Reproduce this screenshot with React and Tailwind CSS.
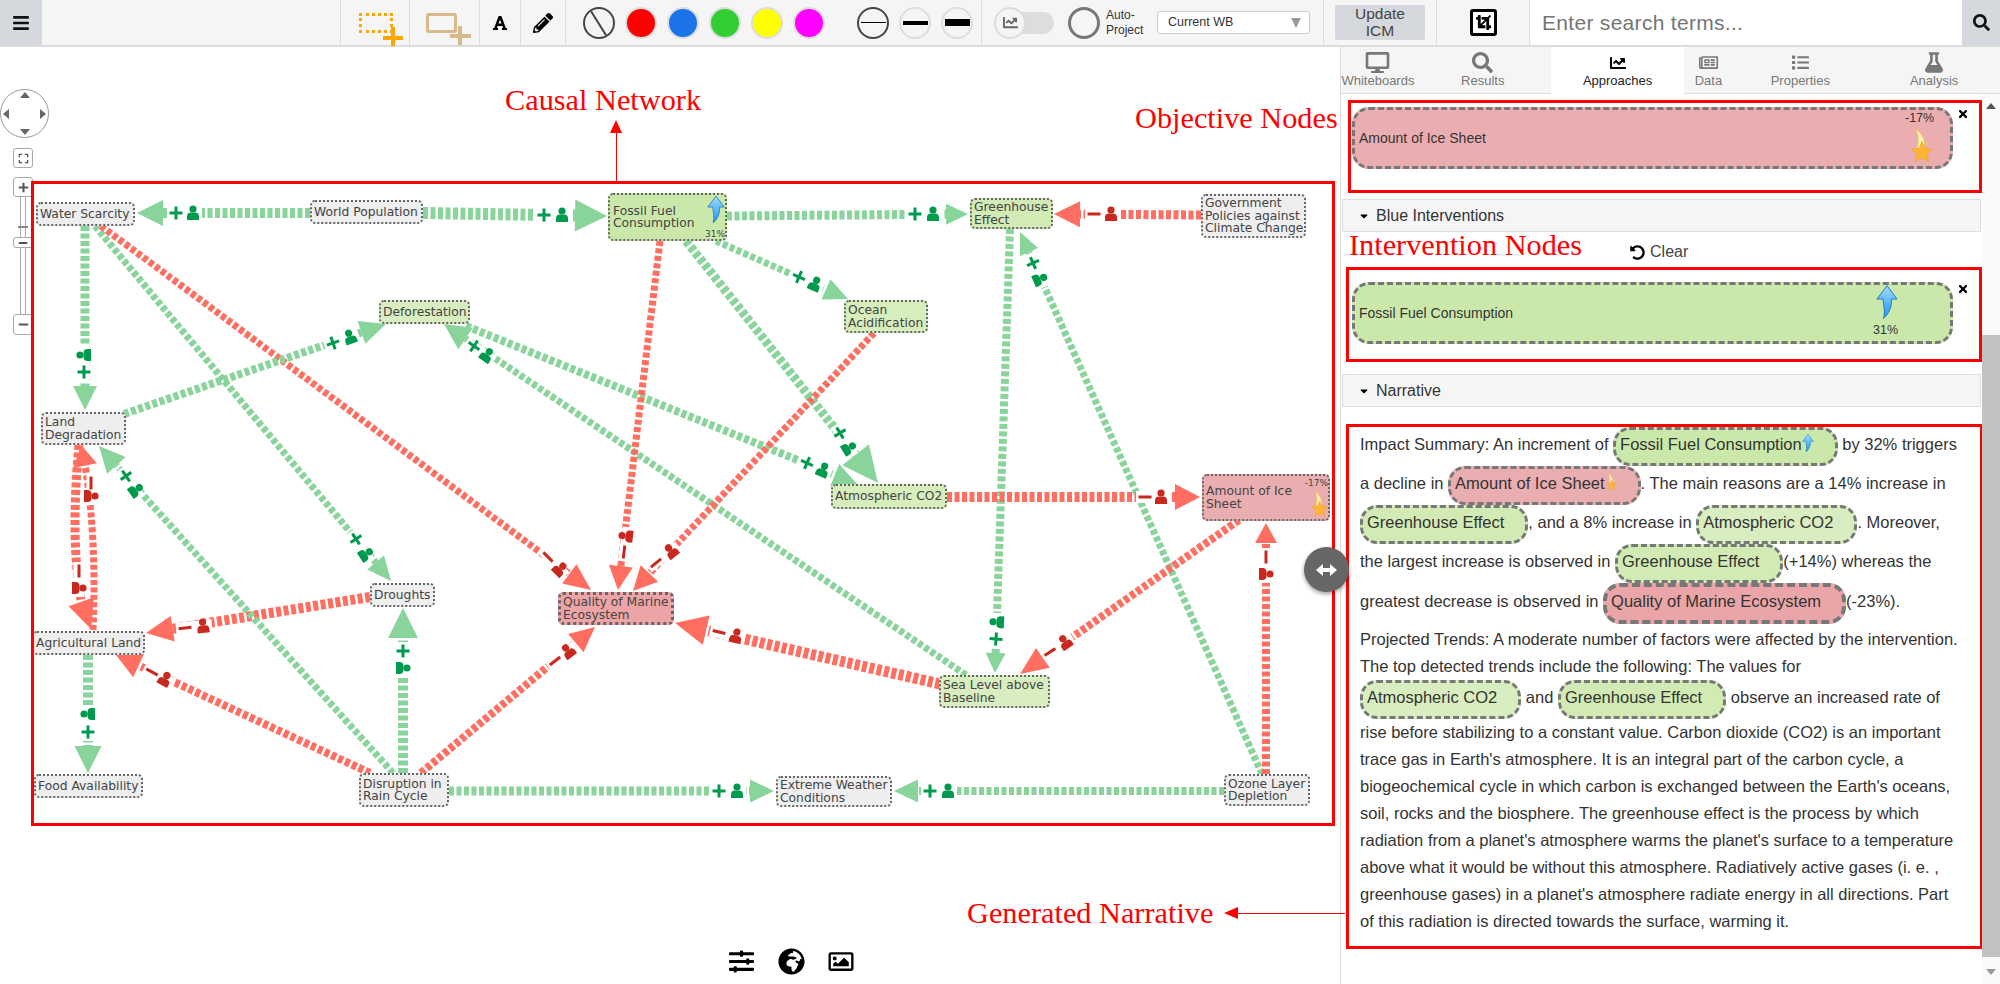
import React from 'react';
import {
  FaBars, FaFont, FaPencilAlt, FaChartLine, FaSearch, FaDesktop, FaRegNewspaper, FaList, FaFlask,
  FaTimes, FaCaretDown, FaUndoAlt, FaCrop, FaSlidersH, FaGlobeAfrica, FaRegImage, FaExpand, FaPlus, FaMinus,
} from 'react-icons/fa';

const GREEN = '#88d49b';
const RED = '#ff6e60';
const GREEN_DARK = '#009a4e';
const RED_DARK = '#c9281e';

// from, tip, stroke width, head length, head width, sign pos, person pos
const edges = [
  { s: '+', a: [423, 213], b: [607, 216], w: 12, hl: 32, hw: 32, g: [544, 215], p: [562, 215] },
  { s: '+', a: [310, 213], b: [137, 213], w: 10, hl: 26, hw: 26, g: [176, 213], p: [193, 213] },
  { s: '+', a: [85, 226], b: [85, 410], w: 9, hl: 24, hw: 24, g: [84, 372], p: [84, 355] },
  { s: '+', a: [95, 226], b: [391, 581], w: 7, hl: 24, hw: 22, g: [356, 539], p: [366, 554] },
  { s: '-', a: [101, 226], b: [591, 590], w: 7, hl: 27, hw: 24, g: [548, 557], p: [560, 569] },
  { s: '+', a: [124, 414], b: [386, 324], w: 8, hl: 26, hw: 24, g: [333, 343], p: [350, 337] },
  { s: '+', a: [466, 326], b: [857, 484], w: 8, hl: 24, hw: 24, g: [807, 463], p: [823, 470] },
  { s: '+', a: [966, 675], b: [444, 324], w: 7, hl: 26, hw: 26, g: [474, 346], p: [487, 355] },
  { s: '+', a: [716, 241], b: [848, 299], w: 7, hl: 24, hw: 22, g: [799, 277], p: [815, 284] },
  { s: '+', a: [686, 241], b: [878, 483], w: 9, hl: 36, hw: 34, g: [840, 433], p: [849, 448] },
  { s: '+', a: [727, 216], b: [968, 214], w: 9, hl: 22, hw: 21, g: [915, 214], p: [933, 214] },
  { s: '-', a: [1201, 215], b: [1054, 214], w: 9, hl: 26, hw: 26, g: [1094, 214], p: [1111, 214] },
  { s: '+', a: [1010, 229], b: [995, 673], w: 8, hl: 20, hw: 20, g: [996, 639], p: [997, 622] },
  { s: '+', a: [1262, 774], b: [1020, 232], w: 7, hl: 22, hw: 20, g: [1033, 263], p: [1040, 279] },
  { s: '-', a: [947, 497], b: [1200, 497], w: 10, hl: 25, hw: 26, g: [1145, 497], p: [1161, 497] },
  { s: '-', a: [1266, 774], b: [1266, 523], w: 8, hl: 20, hw: 22, g: [1266, 557], p: [1266, 574] },
  { s: '-', a: [1239, 520], b: [1020, 674], w: 8, hl: 28, hw: 24, g: [1050, 652], p: [1065, 642] },
  { s: '-', a: [940, 684], b: [675, 623], w: 11, hl: 32, hw: 30, g: [719, 632], p: [736, 636] },
  { s: '-', a: [660, 241], b: [618, 590], w: 7, hl: 24, hw: 24, g: [624, 552], p: [626, 536] },
  { s: '-', a: [874, 333], b: [633, 591], w: 7, hl: 24, hw: 24, g: [656, 563], p: [671, 551] },
  { s: '-', a: [370, 597], b: [146, 633], w: 10, hl: 27, hw: 26, g: [185, 628], p: [203, 626] },
  { s: '-', a: [370, 773], b: [116, 655], w: 8, hl: 25, hw: 26, g: [152, 672], p: [165, 679] },
  { s: '+', a: [393, 773], b: [99, 446], w: 7, hl: 26, hw: 25, g: [126, 476], p: [136, 490] },
  { s: '+', a: [403, 773], b: [403, 608], w: 10, hl: 30, hw: 30, g: [403, 651], p: [403, 668] },
  { s: '-', a: [421, 773], b: [595, 627], w: 8, hl: 25, hw: 24, g: [555, 661], p: [568, 651] },
  { s: '+', a: [88, 655], b: [88, 773], w: 10, hl: 27, hw: 27, g: [88, 732], p: [88, 714] },
  { s: '+', a: [449, 791], b: [774, 791], w: 9, hl: 24, hw: 23, g: [719, 791], p: [737, 791] },
  { s: '+', a: [1224, 791], b: [894, 791], w: 8, hl: 24, hw: 23, g: [930, 791], p: [948, 791] },
  // the two bowed edges between Land Degradation and Agricultural Land
  { s: '-', a: [79, 445], b: [91, 629], ctrl: [70, 540], w: 9, hl: 29, hw: 27, g: [79, 571], p: [79, 588], from: [80, 598] },
  { s: '-', a: [93, 630], b: [81, 445], ctrl: [97, 540], w: 7, hl: 21, hw: 24, g: [91, 483], p: [91, 496], from: [85, 465] },
];

function headPoints(e) {
  const src = e.from || e.a;
  const dx = e.b[0] - src[0];
  const dy = e.b[1] - src[1];
  const len = Math.hypot(dx, dy);
  const ux = dx / len;
  const uy = dy / len;
  const bx = e.b[0] - ux * e.hl;
  const by = e.b[1] - uy * e.hl;
  const hx = (-uy * e.hw) / 2;
  const hy = (ux * e.hw) / 2;
  return { bx, by, pts: `${e.b[0]},${e.b[1]} ${bx + hx},${by + hy} ${bx - hx},${by - hy}` };
}

function EdgeLine({ e }) {
  const color = e.s === '+' ? GREEN : RED;
  const { bx, by, pts } = headPoints(e);
  const d = e.ctrl
    ? `M${e.a[0]} ${e.a[1]} Q${e.ctrl[0]} ${e.ctrl[1]} ${bx} ${by}`
    : `M${e.a[0]} ${e.a[1]} L${bx} ${by}`;
  return (
    <g>
      <path d={d} fill="none" stroke={color} strokeWidth={e.w} strokeDasharray="5 2.5" />
      <polygon points={pts} fill={color} />
    </g>
  );
}

function EdgeLabel({ e }) {
  const color = e.s === '+' ? GREEN_DARK : RED_DARK;
  const dx = e.p[0] - e.g[0];
  const dy = e.p[1] - e.g[1];
  const angle = (Math.atan2(dy, dx) * 180) / Math.PI;
  const cx = (e.g[0] + e.p[0]) / 2;
  const cy = (e.g[1] + e.p[1]) / 2;
  const gap = Math.hypot(dx, dy);
  return (
    <g>
      <rect x={-gap / 2 - 9} y={-e.w / 2 - 1} width={gap + 18} height={e.w + 2} fill="#fff" transform={`translate(${cx} ${cy}) rotate(${angle})`} />
      <g transform={`translate(${e.g[0]} ${e.g[1]}) rotate(${angle})`}>
        <rect x="-6.5" y="-1.5" width="13" height="3" fill={color} />
        {e.s === '+' && <rect x="-1.5" y="-6.5" width="3" height="13" fill={color} />}
      </g>
      <g transform={`translate(${e.p[0]} ${e.p[1]}) rotate(${angle})`} fill={color}>
        <circle cx="0" cy="-4" r="3.6" />
        <path d="M-6 7 v-3.5 a4 4 0 0 1 4 -4 h4 a4 4 0 0 1 4 4 v3.5 z" />
      </g>
    </g>
  );
}

function BlueArrow({ className }) {
  return (
    <svg viewBox="0 0 22 34" className={className}>
      <defs>
        <linearGradient id="blueArrowFill" x1="0" y1="0" x2="0" y2="1">
          <stop offset="0" stopColor="#9fdcff" />
          <stop offset="1" stopColor="#1f97ec" />
        </linearGradient>
      </defs>
      <path d="M11 .7 L21 14 L15.5 14 C15.8 22 13 29 7.5 33.3 C9.5 26 7.5 20 7 14 L1 14 Z" fill="url(#blueArrowFill)" stroke="#1b7cc4" strokeWidth="1" />
    </svg>
  );
}

function Flame({ className }) {
  return (
    <svg viewBox="0 0 24 34" className={className}>
      <path d="M7 0 C13 4 17 12 15.5 20 L8 19 C10 13 9 6 7 0 Z" fill="#fff3b0" stroke="#eec34a" strokeWidth=".8" />
      <polygon points="13,12.5 15.9,19.5 23.5,20.1 17.8,25.1 19.5,32.4 13,28.5 6.5,32.4 8.2,25.1 2.5,20.1 10.1,19.5" fill="#ffb733" stroke="#eda52a" strokeWidth=".8" />
    </svg>
  );
}

const nodes = [
  { t: 'Water Scarcity', c: 'left-[36px] top-[155px] w-[99px] h-[24px] bg-[#eeeeee]' },
  { t: 'World Population', c: 'left-[310px] top-[153px] w-[113px] h-[24px] bg-[#eeeeee]' },
  { t: 'Greenhouse\nEffect', c: 'left-[970px] top-[151px] w-[83px] h-[31px] bg-[#d2eab4]' },
  { t: 'Government\nPolicies against\nClimate Change', c: 'left-[1201px] top-[147px] w-[105px] h-[44px] bg-[#eeeeee]' },
  { t: 'Ocean\nAcidification', c: 'left-[844px] top-[253px] w-[84px] h-[33px] bg-[#d6edbc]' },
  { t: 'Deforestation', c: 'left-[379px] top-[253px] w-[91px] h-[24px] bg-[#d9eec0]' },
  { t: 'Land\nDegradation', c: 'left-[41px] top-[365px] w-[85px] h-[33px] bg-[#eeeeee]' },
  { t: 'Atmospheric CO2', c: 'left-[831px] top-[437px] w-[116px] h-[25px] bg-[#d6edbc]' },
  { t: 'Droughts', c: 'left-[370px] top-[536px] w-[65px] h-[24px] bg-[#eeeeee]' },
  { t: 'Agricultural Land', c: 'left-[32px] top-[584px] w-[113px] h-[24px] bg-[#eeeeee]' },
  { t: 'Food Availability', c: 'left-[34px] top-[727px] w-[109px] h-[24px] bg-[#eeeeee]' },
  { t: 'Disruption in\nRain Cycle', c: 'left-[359px] top-[726px] w-[90px] h-[34px] bg-[#eeeeee]' },
  { t: 'Sea Level above\nBaseline', c: 'left-[939px] top-[628px] w-[111px] h-[33px] bg-[#d9eec0]' },
  { t: 'Extreme Weather\nConditions', c: 'left-[776px] top-[729px] w-[116px] h-[31px] bg-[#eeeeee]' },
  { t: 'Ozone Layer\nDepletion', c: 'left-[1224px] top-[727px] w-[86px] h-[32px] bg-[#eeeeee]' },
];

function Node({ t, c, children }) {
  return (
    <div className={`absolute flex items-center pl-[2px] border-2 border-dotted border-[#666] rounded-[5px] font-['DejaVu_Sans',sans-serif] text-[12.3px] leading-[12.5px] text-[#444] whitespace-pre-line ${c}`}>
      {t}
      {children}
    </div>
  );
}

function ColorDot({ className }) {
  return <div className={`w-8 h-8 rounded-full border-2 border-[#ddd] ${className}`} />;
}

function Sep({ className }) {
  return <div className={`h-full border-r border-[#ddd] ${className}`} />;
}

function WeightDot({ bar, ring }) {
  return (
    <div className={`w-8 h-8 rounded-full border-2 flex items-center justify-center ${ring}`}>
      <div className={`w-[25px] bg-black ${bar}`} />
    </div>
  );
}

function Toolbar() {
  return (
    <div className="flex h-[47px] items-stretch bg-[#f5f5f5] border-b-2 border-[#ddd] text-[#333]">
      <div className="w-[42px] bg-[#d5d8dc] flex items-center justify-center"><FaBars className="w-[18px] h-[18px] text-[#111]" /></div>
      <Sep className="w-[299px]" />
      <div className="w-[69px] flex justify-center pt-[13px] relative">
        <div className="w-[34px] h-[20px] border-[3px] border-dotted border-[#ffa500]" />
        <div className="absolute left-[42px] top-[36px] w-[20px] h-[4px] bg-[#ffa500]" />
        <div className="absolute left-[50px] top-[27px] w-[4px] h-[19px] bg-[#ffa500]" />
        <Sep className="absolute right-0 top-0" />
      </div>
      <div className="w-[70px] flex justify-center pt-[13px] relative">
        <div className="w-[31px] h-[20px] border-[3px] border-[#d9b88a] rounded-[3px] -ml-[8px]" />
        <div className="absolute left-[40px] top-[34px] w-[21px] h-[4px] bg-[#d9b88a]" />
        <div className="absolute left-[48px] top-[26px] w-[4px] h-[19px] bg-[#d9b88a]" />
        <Sep className="absolute right-0 top-0" />
      </div>
      <div className="w-[41px] flex items-center justify-center border-r border-[#ddd]"><FaFont className="w-[16px] h-[16px] text-black" /></div>
      <div className="w-[45px] flex items-center justify-center border-r border-[#ddd]"><FaPencilAlt className="w-[20px] h-[20px] text-black" /></div>
      <div className="flex items-center w-[416px] pl-[17px] gap-[10px] border-r border-[#ddd]">
        <div className="w-8 h-8 rounded-full border-2 border-[#444] relative overflow-hidden">
          <div className="absolute left-[13px] -top-[2px] w-[2px] h-[34px] bg-[#444] -rotate-[32deg]" />
        </div>
        <ColorDot className="bg-[#ff0000]" />
        <ColorDot className="bg-[#1a73e8]" />
        <ColorDot className="bg-[#32cd32]" />
        <ColorDot className="bg-[#ffff00]" />
        <ColorDot className="bg-[#ff00ff]" />
        <div className="w-[12px]" />
        <WeightDot bar="h-[1px]" ring="border-[#444]" />
        <WeightDot bar="h-[4px]" ring="border-[#ddd]" />
        <WeightDot bar="h-[7px]" ring="border-[#ddd]" />
      </div>
      <div className="w-[342px] flex items-center border-r border-[#ddd] pl-[13px]">
        <div className="w-[59px] h-[22px] rounded-full bg-[#ddd] relative flex items-center">
          <div className="absolute -left-[1px] -top-[5px] w-8 h-8 rounded-full bg-[#f5f5f5] border-2 border-[#ddd] flex items-center justify-center">
            <FaChartLine className="w-[15px] h-[15px] text-[#666]" />
          </div>
        </div>
        <div className="w-8 h-8 ml-[14px] rounded-full border-[3px] border-[#777]" />
        <div className="ml-[6px] w-[46px] text-[12px] leading-[15px] text-[#333]">Auto-<br />Project</div>
        <div className="ml-[5px] w-[153px] h-[23px] rounded-[3px] bg-white border border-[#ccc] flex items-center justify-between pl-[10px] pr-[8px] text-[12.5px]">
          <span>Current WB</span>
          <span className="w-0 h-0 border-x-[5px] border-x-transparent border-t-[10px] border-t-[#999]" />
        </div>
      </div>
      <div className="w-[113px] flex items-center justify-center border-r border-[#ddd]">
        <div className="w-[90px] h-[35px] bg-[#d5d8dc] rounded-[2px] text-center text-[15.5px] leading-[17px] text-[#444]">Update<br />ICM</div>
      </div>
      <div className="w-[93px] flex items-center justify-center border-r border-[#ddd]">
        <div className="w-[27px] h-[27px] border-[3px] border-black rounded-[3px] bg-white flex items-center justify-center"><FaCrop className="w-[15px] h-[15px] text-black" /></div>
      </div>
      <div className="flex-1 bg-white pl-[12px] flex items-center text-[21px] text-[#757575] tracking-[0.3px]">Enter search terms...</div>
      <div className="w-[38px] bg-[#d5d8dc] flex items-center justify-center"><FaSearch className="w-[17px] h-[17px] text-[#111]" /></div>
    </div>
  );
}

function ZoomBtn({ className, children }) {
  return <div className={`absolute left-[13px] w-[20px] border border-[#aaa] rounded-[3px] bg-white flex items-center justify-center text-[#555] ${className}`}>{children}</div>;
}

function Canvas() {
  return (
    <div className="relative w-[1340px] shrink-0">
      {/* pan and zoom controls */}
      <div className="absolute left-0 top-[42px] w-[49px] h-[49px] rounded-full border border-[#999] bg-white">
        <span className="absolute left-[19px] top-[2px] w-0 h-0 border-x-[5px] border-x-transparent border-b-[6px] border-b-[#666]" />
        <span className="absolute left-[19px] bottom-[2px] w-0 h-0 border-x-[5px] border-x-transparent border-t-[6px] border-t-[#666]" />
        <span className="absolute left-[2px] top-[19px] w-0 h-0 border-y-[5px] border-y-transparent border-r-[6px] border-r-[#666]" />
        <span className="absolute right-[2px] top-[19px] w-0 h-0 border-y-[5px] border-y-transparent border-l-[6px] border-l-[#666]" />
      </div>
      <ZoomBtn className="top-[101px] h-[20px]"><FaExpand className="w-[11px] h-[11px]" /></ZoomBtn>
      <div className="absolute left-[20px] top-[150px] w-[6px] h-[118px] border-x border-[#aaa]" />
      <div className="absolute left-[18px] top-[179px] w-[10px] h-[2px] bg-[#888]" />
      <ZoomBtn className="top-[130px] h-[20px]"><FaPlus className="w-[11px] h-[11px]" /></ZoomBtn>
      <ZoomBtn className="top-[190px] h-[11px]"><FaMinus className="w-[10px] h-[10px]" /></ZoomBtn>
      <ZoomBtn className="top-[267px] h-[21px]"><FaMinus className="w-[11px] h-[11px]" /></ZoomBtn>

      <svg viewBox="0 47 1340 937" className="absolute left-0 top-0 w-[1340px] h-[937px]">
        {edges.map((e, i) => <EdgeLine key={i} e={e} />)}
        {edges.map((e, i) => <EdgeLabel key={i} e={e} />)}
      </svg>

      {nodes.map((n) => <Node key={n.t} t={n.t} c={n.c} />)}
      <Node t={'Fossil Fuel\nConsumption'} c="left-[608px] top-[146px] w-[119px] h-[48px] bg-[#cbe8ab] pl-[3px]">
        <BlueArrow className="absolute right-[0px] top-0 w-[18px] h-[29px]" />
        <span className="absolute right-0 bottom-0 text-[9px] leading-[10px]">31%</span>
      </Node>
      <Node t={'Amount of Ice\nSheet'} c="left-[1202px] top-[427px] w-[128px] h-[47px] bg-[#ebaeb0]">
        <span className="absolute right-0 top-[2px] text-[9px] leading-[10px]">-17%</span>
        <Flame className="absolute right-0 bottom-0 w-[18px] h-[29px]" />
      </Node>
      <Node t={'Quality of Marine\nEcosystem'} c="left-[558px] top-[545px] w-[116px] h-[33px] bg-[#eca4a7] border-[3px]" />

      {/* annotations */}
      <div className="absolute left-[31px] top-[134px] w-[1304px] h-[645px] border-[3px] border-[#ff0000]" />
      <div className="absolute left-[505px] top-[37px] font-['Liberation_Serif',serif] text-[30.3px] leading-[32px] text-[#ff0000]">Causal Network</div>
      <div className="absolute left-[615.5px] top-[85px] w-px h-[50px] bg-[#ff0000]" />
      <div className="absolute left-[610px] top-[73px] w-0 h-0 border-x-[6px] border-x-transparent border-b-[13px] border-b-[#ff0000]" />
      <div className="absolute left-[1135px] top-[55px] font-['Liberation_Serif',serif] text-[30.3px] leading-[32px] text-[#ff0000]">Objective Nodes</div>
      <div className="absolute left-[967px] top-[850px] font-['Liberation_Serif',serif] text-[30.3px] leading-[32px] text-[#ff0000]">Generated Narrative</div>
      <div className="absolute left-[1238px] top-[866px] w-[107px] h-px bg-[#ff0000]" />
      <div className="absolute left-[1224px] top-[860px] w-0 h-0 border-y-[6px] border-y-transparent border-r-[14px] border-r-[#ff0000]" />

      {/* bottom tools */}
      <div className="absolute left-[727px] top-[901px] flex items-center gap-[22px] text-black">
        <FaSlidersH className="w-[29px] h-[25px]" />
        <FaGlobeAfrica className="w-[27px] h-[27px]" />
        <FaRegImage className="w-[28px] h-[25px]" />
      </div>

      {/* panel resize handle */}
      <div className="absolute z-10 left-[1304px] top-[500px] w-[45px] h-[45px] rounded-full bg-[#666] shadow-[0_2px_4px_rgba(0,0,0,0.4)] flex items-center justify-center text-white">
        <span className="w-0 h-0 border-y-[6px] border-y-transparent border-r-[7px] border-r-white" />
        <span className="w-[7px] h-[4px] bg-white" />
        <span className="w-0 h-0 border-y-[6px] border-y-transparent border-l-[7px] border-l-white" />
      </div>
    </div>
  );
}

const tabs = [
  { label: 'Whiteboards', Icon: FaDesktop, c: 'w-[74px] text-[#777] border-b', ic: 'w-[27px] h-[21px]' },
  { label: 'Results', Icon: FaSearch, c: 'w-[136px] text-[#777] border-b', ic: 'w-[21px] h-[21px]' },
  { label: 'Approaches', Icon: FaChartLine, c: 'w-[134px] bg-white text-[#222]', ic: 'w-[20px] h-[16px] text-black' },
  { label: 'Data', Icon: FaRegNewspaper, c: 'w-[48px] text-[#777] border-b', ic: 'w-[23px] h-[17px]' },
  { label: 'Properties', Icon: FaList, c: 'w-[136px] text-[#777] border-b', ic: 'w-[21px] h-[17px]' },
  { label: 'Analysis', Icon: FaFlask, c: 'w-[132px] text-[#777] border-b', ic: 'w-[18px] h-[21px]' },
];

function Tabs() {
  return (
    <div className="flex h-[47px] bg-[#f5f5f5]">
      {tabs.map(({ label, Icon, c, ic }) => (
        <div key={label} className={`flex flex-col items-center pt-[5px] text-[13px] leading-[15px] border-[#ddd] ${c}`}>
          <span className="h-[21px] flex items-center"><Icon className={ic} /></span>
          <span>{label}</span>
        </div>
      ))}
    </div>
  );
}

function SectionHeader({ title, className }) {
  return (
    <div className={`ml-[1px] w-[639px] h-[33px] flex items-center pl-[15px] gap-[6px] bg-[#f5f5f5] border border-[#ddd] text-[16px] text-[#333] ${className}`}>
      <FaCaretDown className="w-[12px] h-[12px] text-black" />
      {title}
    </div>
  );
}

// wide objective / intervention node inside its red box
function NodeCard({ label, bg, children }) {
  return (
    <div className={`relative w-[601px] h-[62px] border-[3px] border-dashed border-[#777] rounded-[17px] flex items-center pl-[4px] text-[14px] text-[#333] ${bg}`}>
      {label}
      {children}
    </div>
  );
}

function Pill({ children, c = 'bg-[#d2eab4]' }) {
  return (
    <span className={`inline-block border-[3px] border-dashed border-[#777] rounded-[17px] pl-[4px] pr-[21px] pt-[1px] pb-[5px] whitespace-nowrap ${c}`}>
      {children}
    </span>
  );
}

function Narrative() {
  return (
    <div className="ml-[5px] mt-[17px] w-[637px] h-[525px] border-[3px] border-[#ff0000] pl-[11px] text-[16.5px] leading-[27px] text-[#333]">
      <div className="w-[602px]">
        <p>
          Impact Summary: An increment of <Pill c="bg-[#cbe8ab]">Fossil Fuel Consumption<BlueArrow className="inline-block align-[-3px] w-[12px] h-[20px]" /></Pill> by 32% triggers
          a decline in <Pill c="bg-[#ebaeb0]">Amount of Ice Sheet<Flame className="inline-block align-[-3px] w-[12px] h-[20px]" /></Pill>. The main reasons are a 14% increase in{' '}
          <Pill>Greenhouse Effect</Pill>, and a 8% increase in <Pill c="bg-[#d9eec0]">Atmospheric CO2</Pill>. Moreover,
          the largest increase is observed in <Pill>Greenhouse Effect</Pill>(+14%) whereas the
          greatest decrease is observed in <Pill c="bg-[#eaa5a8] border-[4px]">Quality of Marine Ecosystem</Pill>(-23%).
        </p>
        <p className="mt-[2px]">
          Projected Trends: A moderate number of factors were affected by the intervention.
          The top detected trends include the following: The values for{' '}
          <Pill c="bg-[#d9eec0]">Atmospheric CO2</Pill> and <Pill>Greenhouse Effect</Pill> observe an increased rate of
          rise before stabilizing to a constant value. Carbon dioxide (CO2) is an important
          trace gas in Earth's atmosphere. It is an integral part of the carbon cycle, a
          biogeochemical cycle in which carbon is exchanged between the Earth's oceans,
          soil, rocks and the biosphere. The greenhouse effect is the process by which
          radiation from a planet's atmosphere warms the planet's surface to a temperature
          above what it would be without this atmosphere. Radiatively active gases (i. e. ,
          greenhouse gases) in a planet's atmosphere radiate energy in all directions. Part
          of this radiation is directed towards the surface, warming it.
        </p>
      </div>
    </div>
  );
}

function Panel() {
  return (
    <div className="flex-1 flex flex-col border-l border-[#ddd] min-w-0">
      <Tabs />
      <div className="flex flex-1">
        <div className="w-[641px] shrink-0 relative">
          <div className="relative ml-[7px] mt-[6px] w-[634px] h-[93px] border-[3px] border-[#ff0000] pl-px pt-[4px]">
            <NodeCard label="Amount of Ice Sheet" bg="bg-[#ebaeb0]">
              <span className="absolute left-[550px] top-[1px] text-[12.5px] leading-[14px]">-17%</span>
              <Flame className="absolute left-[554px] top-[19px] w-[24px] h-[34px]" />
            </NodeCard>
            <FaTimes className="absolute right-[10px] top-[5px] w-[12px] h-[12px] text-black" />
          </div>
          <SectionHeader title="Blue Interventions" className="mt-[6px]" />
          <div className="h-[35px] flex items-start pl-[8px]">
            <span className="-mt-[3px] font-['Liberation_Serif',serif] text-[30.3px] leading-[32px] text-[#ff0000]">Intervention Nodes</span>
            <span className="ml-[48px] mt-[10px] flex items-center gap-[5px] text-[16px] leading-[20px] text-[#444]"><FaUndoAlt className="w-[15px] h-[15px] text-black" />Clear</span>
          </div>
          <div className="relative ml-[5px] w-[636px] h-[95px] border-[3px] border-[#ff0000] pl-[3px] pt-[12px]">
            <NodeCard label="Fossil Fuel Consumption" bg="bg-[#cbe8ab]">
              <BlueArrow className="absolute left-[521px] top-0 w-[22px] h-[34px]" />
              <span className="absolute left-[518px] top-[38px] text-[12.5px] leading-[14px]">31%</span>
            </NodeCard>
            <FaTimes className="absolute right-[10px] top-[13px] w-[12px] h-[12px] text-black" />
          </div>
          <SectionHeader title="Narrative" className="mt-[12px]" />
          <Narrative />
        </div>
        {/* scrollbar */}
        <div className="w-[18px] bg-[#fafafa] flex flex-col items-center relative">
          <div className="h-[241px] pt-[9px]"><span className="block w-0 h-0 border-x-[5px] border-x-transparent border-b-[6px] border-b-[#555]" /></div>
          <div className="w-full h-[622px] bg-[#c1c1c1]" />
          <div className="pt-[12px]"><span className="block w-0 h-0 border-x-[5px] border-x-transparent border-t-[6px] border-t-[#999]" /></div>
        </div>
      </div>
    </div>
  );
}

export default function App() {
  return (
    <div className="w-[2000px] h-[984px] overflow-hidden bg-white font-['Liberation_Sans',Arial,sans-serif] flex flex-col">
      <Toolbar />
      <div className="flex flex-1">
        <Canvas />
        <Panel />
      </div>
    </div>
  );
}
